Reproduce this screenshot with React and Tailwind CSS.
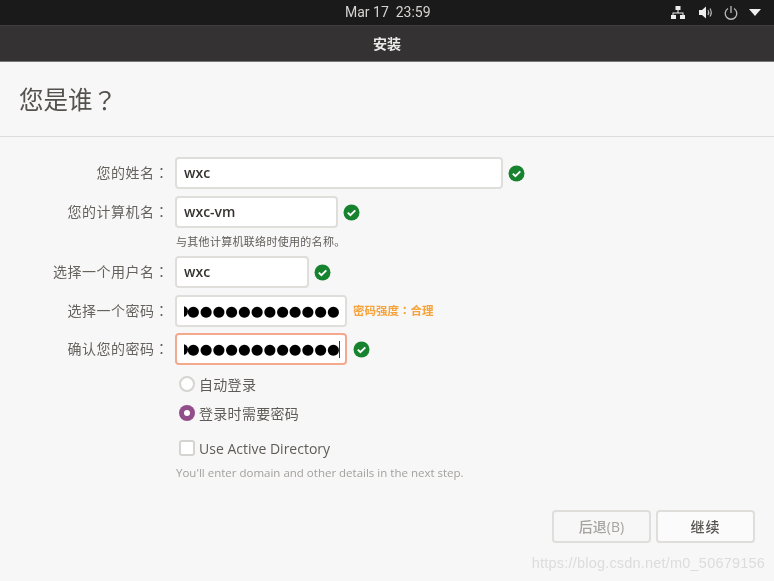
const FONT = "font-['Open_Sans','Noto_Sans_CJK_SC',sans-serif]";

// the traditional chinese cut has the fullwidth colon and question mark centred, as in the picture
function Mark({ children }) {
  return <span className="font-['Noto_Sans_CJK_TC',sans-serif]">{children}</span>;
}

function Check() {
  return (
    <svg width="17" height="17" viewBox="0 0 17 17" className="shrink-0">
      <circle cx="8.5" cy="8.5" r="8" fill="#17832f" />
      <path d="M4.8 8.6l2.6 2.5 4.9-4.7" fill="none" stroke="#fff" strokeWidth="2" />
    </svg>
  );
}

function Row({ label, inputClass, children, after, mb }) {
  return (
    <div className={`flex items-center ${mb}`}>
      <div className="w-[169px] pb-[1px] text-right text-[14px] tracking-[0.5px] text-[#66635f]">
        {label}
        <Mark>：</Mark>
      </div>
      <div className={`ml-[6px] h-[32px] rounded-[4px] border-2 bg-white flex items-center overflow-hidden ${inputClass}`}>
        {children}
      </div>
      {after}
    </div>
  );
}

function Value({ children }) {
  return <span className="pl-[7px] pb-[1px] text-[14px] font-semibold text-[#35332f]">{children}</span>;
}

function Dots({ caret }) {
  return (
    <div className="relative flex items-center h-full w-full pl-[7px]">
      {/* sliver of the dot scrolled out on the left */}
      <span className="w-[4px] h-[11px] overflow-hidden flex justify-end shrink-0">
        <span className="w-[11px] h-[11px] shrink-0 rounded-full bg-black" />
      </span>
      <span className="ml-[-1px] whitespace-nowrap text-[14.6px] leading-none text-black font-['DejaVu_Sans',sans-serif]">
        ●●●●●●●●●●●●
      </span>
      {caret && <span className="absolute right-[5px] top-[6px] h-[17px] w-[1px] bg-[#333]" />}
    </div>
  );
}

export default function App() {
  return (
    <div className={`relative w-[774px] h-[581px] overflow-hidden flex flex-col bg-[#f7f7f7] blur-[0.4px] ${FONT}`}>
      {/* gnome top bar */}
      <div className="h-[25px] shrink-0 bg-[#1b1a1a] flex items-center pl-[345px] text-[14px] text-[#d6d4d2] font-['Roboto','Noto_Sans',sans-serif]">
        <span className="whitespace-pre">Mar 17  23:59</span>
        <div className="ml-auto flex items-center">
          <svg width="16" height="15" viewBox="0 0 16 15" className="mr-[12px]" fill="#eee">
            <rect x="5.5" y="1" width="5" height="4" />
            <rect x="1" y="10" width="5" height="4" />
            <rect x="10" y="10" width="5" height="4" />
            <path d="M7.5 5h1v2.5h5V10h-1V8.500H3.500V10h-1V7.500h5z" />
          </svg>
          <svg width="16" height="15" viewBox="0 0 16 15" className="mr-[9px]">
            <path d="M1 5h3l4-3.500v12L4 10H1z" fill="#eee" />
            <path d="M10 5q1.500 2.500 0 5M12 3.500q2.500 4 0 8" fill="none" stroke="#bbb" strokeWidth="1.200" />
          </svg>
          <svg width="16" height="16" viewBox="0 0 16 16" className="mr-[10px]" fill="none" stroke="#bdbbb9" strokeWidth="1.300">
            <path d="M5 3.500a5.800 5.800 0 1 0 6 0" />
            <path d="M8 1v7" />
          </svg>
          <svg width="12" height="8" viewBox="0 0 12 8" className="mr-[13px]">
            <path d="M0 0h12L6 7z" fill="#eee" />
          </svg>
        </div>
      </div>

      {/* window title */}
      <div className="h-[37px] shrink-0 bg-[#343232] border-t border-[#3f3d3d] border-b border-b-[#777] flex items-center justify-center text-[14px] font-semibold text-[#ecebea]">
        安装
      </div>

      {/* page heading */}
      <div className="h-[75px] shrink-0 border-b border-[#dedddb] flex items-center pl-[19px] pt-[3px] text-[24.500px] text-[#55524e]">
        您是谁<Mark>？</Mark>
      </div>

      {/* form */}
      <div className="pt-[20px] flex flex-col">
        <Row label="您的姓名" inputClass="w-[328px] border-[#e0dedb]" mb="mb-[7px]" after={<span className="ml-[5px]"><Check /></span>}>
          <Value>wxc</Value>
        </Row>
        <Row label="您的计算机名" inputClass="w-[163px] border-[#e0dedb]" after={<span className="ml-[5px]"><Check /></span>}>
          <Value>wxc-vm</Value>
        </Row>
        <div className="ml-[176px] h-[28px] pt-[6px] text-[11px] leading-[15px] tracking-[0.3px] text-[#5f5c58]">与其他计算机联络时使用的名称。</div>
        <Row label="选择一个用户名" inputClass="w-[134px] border-[#e0dedb]" mb="mb-[7px]" after={<span className="ml-[5px]"><Check /></span>}>
          <Value>wxc</Value>
        </Row>
        <Row label="选择一个密码" inputClass="w-[172px] border-[#e0dedb]" mb="mb-[6px]" after={<span className="ml-[6px] text-[11.500px] font-semibold text-[#f6a33c]">密码强度<Mark>：</Mark>合理</span>}>
          <Dots />
        </Row>
        <Row label="确认您的密码" inputClass="w-[172px] border-[#f4a98f]" after={<span className="ml-[6px]"><Check /></span>}>
          <Dots caret />
        </Row>

        <div className="ml-[179px] mt-[9px] flex items-center h-[20px] text-[14px] tracking-[0.3px] text-[#5f5c58]">
          <span className="w-[16px] h-[16px] rounded-full border-2 border-[#d6d4d1] bg-white" />
          <span className="ml-[4px]">自动登录</span>
        </div>
        <div className="ml-[179px] mt-[9px] flex items-center h-[20px] text-[14px] tracking-[0.3px] text-[#5f5c58]">
          <span className="w-[16px] h-[16px] rounded-full bg-[#924d8b] flex items-center justify-center">
            <span className="w-[6px] h-[6px] rounded-full bg-white" />
          </span>
          <span className="ml-[4px]">登录时需要密码</span>
        </div>
        <div className="ml-[179px] mt-[15px] flex items-center h-[20px] text-[14px] font-medium text-[#5f5c58]">
          <span className="w-[16px] h-[16px] rounded-[3px] border-2 border-[#d6d4d1] bg-white" />
          <span className="ml-[4px]">Use Active Directory</span>
        </div>
        <div className="ml-[176px] mt-[7px] text-[11.500px] leading-[16px] text-[#a3a19e]">
          You'll enter domain and other details in the next step.
        </div>
      </div>

      {/* buttons */}
      <div className="mt-[29px] pr-[19px] flex justify-end gap-[5px]">
        <button className="w-[99px] h-[33px] rounded-[4px] border-2 border-[#dfdedb] bg-[#f7f7f7] text-[14px] font-medium text-[#a5a3a0]">后退(B)</button>
        <button className="w-[99px] h-[33px] rounded-[4px] border-2 border-[#dfdedb] bg-[#fbfbfb] text-[14px] tracking-[1px] font-medium text-[#55524e]">继续</button>
      </div>

      {/* csdn watermark */}
      <div className="absolute right-[9px] top-[554px] text-[14.500px] leading-[18px] tracking-[0.2px] text-[#dcdcdc] font-['Liberation_Sans',sans-serif]">
        https://blog.csdn.net/m0_50679156
      </div>
    </div>
  );
}
